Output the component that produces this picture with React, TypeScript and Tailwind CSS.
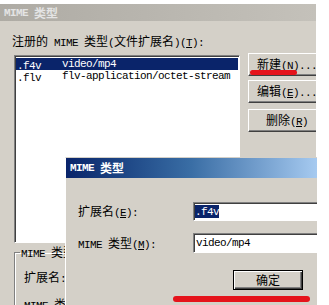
import React from 'react';

const latin = "font-['Liberation_Mono'] text-[11px] tracking-[-0.6px] whitespace-pre";
const han = "font-['Noto_Sans_CJK_SC'] text-[12px]";

// splits a label into CJK / latin runs; "&X" marks an underlined mnemonic
function Txt({ s }: { s: string }) {
  const parts = s.split(/(&.|[\u3000-\u9fff]+)/).filter(Boolean);
  return (
    <>
      {parts.map((p, i) =>
        p[0] === '&' ? (
          <span key={i} className={latin + ' underline'}>{p[1]}</span>
        ) : /[\u3000-\u9fff]/.test(p) ? (
          <span key={i} className={han}>{p}</span>
        ) : (
          <span key={i} className={latin}>{p}</span>
        )
      )}
    </>
  );
}

const Button: React.FC<{ label: string; className?: string }> = ({ label, className = '' }) => (
  <div
    className={
      'w-[78px] h-[23px] flex items-center justify-center bg-[#d4d0c8] border border-t-white border-l-white border-b-[#404040] border-r-[#404040] shadow-[inset_-1px_-1px_0_#808080] ' +
      className
    }
  >
    <span className="leading-[14px]">
      <Txt s={label} />
    </span>
  </div>
);

const rows = [
  { ext: '.f4v', type: 'video/mp4', selected: true },
  { ext: '.flv', type: 'flv-application/octet-stream', selected: false },
];

export default function App() {
  return (
    <div className="relative w-[329px] h-[305px] bg-white overflow-hidden pt-[4px] text-black leading-[14px]">
      {/* outer window */}
      <div className="w-[316px] h-[301px] bg-[#d4d0c8] flex flex-col overflow-hidden">
        <div className="h-[17px] shrink-0 bg-gradient-to-r from-[#aeaba4] to-[#c4c1ba] flex items-center pl-[4px] text-[#e4e4e4] font-bold">
          <Txt s="MIME 类型" />
        </div>

        <div className="pl-[12px] pt-[12px]">
          <Txt s="注册的 MIME 类型(文件扩展名)(&T):" />
        </div>

        <div className="flex items-start mt-[3px] ml-[14px]">
          <div className="mt-[2px] w-[226px] h-[188px] shrink-0 bg-white border border-t-[#808080] border-l-[#808080] border-b-white border-r-white shadow-[inset_1px_1px_0_#404040] pt-[2px] pl-[1px] pr-[1px]">
            {rows.map((r) => (
              <div
                key={r.ext}
                className={
                  r.selected
                    ? 'flex h-[12px] items-center bg-[#0a246a] text-white'
                    : 'flex h-[12px] items-center text-black'
                }
              >
                <span className="w-[46px] pl-[1px]">
                  <Txt s={r.ext} />
                </span>
                <Txt s={r.type} />
              </div>
            ))}
          </div>

          <div className="ml-[8px] flex flex-col shrink-0">
            <Button label="新建(&N)..." />
            <Button label="编辑(&E)..." className="mt-[4px]" />
            <Button label="删除(&R)" className="mt-[6px]" />
          </div>
        </div>

        <fieldset className="ml-[14px] mt-[1px] w-[300px] h-[80px] border border-[#808080] shadow-[inset_1px_1px_0_white,1px_1px_0_white] px-[9px]">
          <legend className="-ml-[4px] px-[1px]">
            <Txt s="MIME 类型" />
          </legend>
          <div className="mt-[8px]">
            <Txt s="扩展名:" />
          </div>
          <div className="mt-[10px]">
            <Txt s="MIME 类型:" />
          </div>
        </fieldset>
      </div>

      {/* inner dialog window */}
      <div className="absolute left-[65px] top-[157px] w-[252px] h-[148px] bg-[#d4d0c8] border-t border-l border-t-[#d4d0c8] border-l-white overflow-hidden">
        <div className="h-[20px] bg-gradient-to-r from-[#0a246a] via-[#3a6ea5] to-[#a6caf0] flex items-center pl-[4px] text-white font-bold">
          <Txt s="MIME 类型" />
        </div>

        <div className="pl-[12px] pt-[24px]">
          <div className="flex items-center h-[19px]">
            <span className="w-[115px] shrink-0">
              <Txt s="扩展名(&E):" />
            </span>
            <div className="w-[140px] h-[19px] shrink-0 bg-white border border-t-[#808080] border-l-[#808080] border-b-white border-r-white shadow-[inset_1px_1px_0_#404040] flex items-center pl-[1px]">
              <span className="bg-[#0a246a] text-white h-[13px] flex items-center">
                <Txt s=".f4v" />
              </span>
            </div>
          </div>

          <div className="flex items-center h-[20px] mt-[12px]">
            <span className="w-[115px] shrink-0">
              <Txt s="MIME 类型(&M):" />
            </span>
            <div className="w-[140px] h-[20px] shrink-0 bg-white border border-t-[#808080] border-l-[#808080] border-b-white border-r-white shadow-[inset_1px_1px_0_#404040] flex items-center pl-[2px]">
              <Txt s="video/mp4" />
            </div>
          </div>

          <div className="flex justify-end mt-[17px] pr-[14px]">
            <div className="w-[70px] h-[20px] flex items-center justify-center border border-black shadow-[inset_1px_1px_0_white,inset_-1px_-1px_0_#404040,inset_-2px_-2px_0_#808080]">
              <Txt s="确定" />
            </div>
          </div>
        </div>
      </div>

      {/* red annotation strokes */}
      <div className="absolute left-[250px] top-[70px] w-[47px] h-[5px] rounded-full bg-[#e5131b]" />
      <div className="absolute left-[173px] top-[296px] w-[137px] h-[6px] rounded-full bg-[#e5131b]" />
    </div>
  );
}
